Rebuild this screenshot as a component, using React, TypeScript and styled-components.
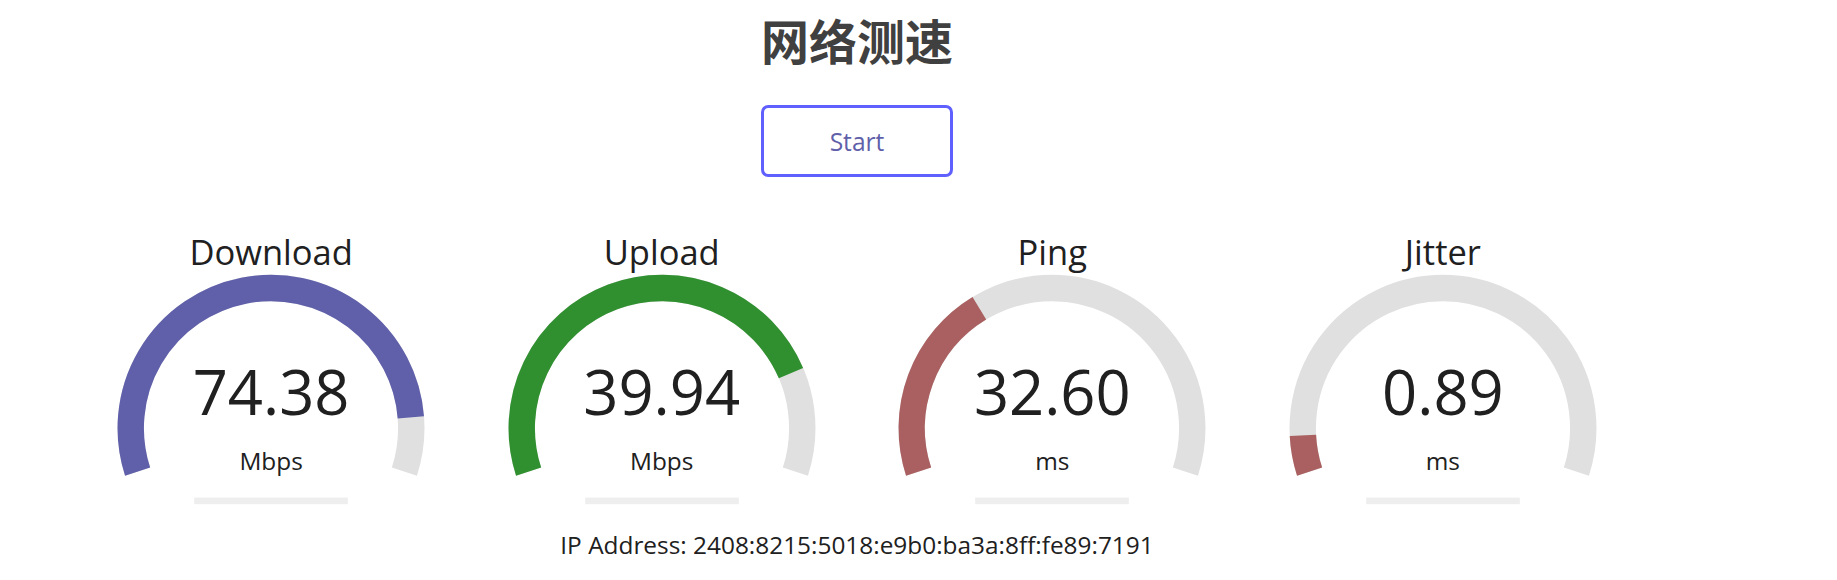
import React from "react";
import styled, { createGlobalStyle } from "styled-components";

const GlobalStyle = createGlobalStyle`
  html, body {
    margin: 0;
    padding: 0;
    border: none;
    background: #ffffff;
    color: #202020;
  }
  body {
    font-family: "Open Sans", "Noto Sans", sans-serif;
    font-size: 24.4px;
  }
`;

const Page = styled.div`
  width: 1714px;
  display: flex;
  flex-direction: column;
  align-items: center;
  text-align: center;
`;

const Title = styled.h1`
  margin: 0;
  padding-top: 11px;
  font-family: "Noto Sans CJK SC", "Noto Sans", sans-serif;
  font-size: 48px;
  line-height: 56px;
  font-weight: 700;
  color: #404040;
`;

const StartButton = styled.div`
  margin-top: 38px;
  box-sizing: border-box;
  width: 192px;
  height: 72px;
  border: 3.6px solid #6060ff;
  border-radius: 7.2px;
  display: flex;
  align-items: center;
  justify-content: center;
  color: #6060aa;
  font-size: 24.6px;
  cursor: pointer;
`;

const GaugeRow = styled.div`
  margin-top: 47px;
  display: flex;
  gap: 6.6px;
  justify-content: center;
`;

const GaugeBox = styled.div`
  position: relative;
  width: 384px;
  height: 300px;
  display: flex;
  flex-direction: column;
  align-items: stretch;
`;

const GaugeSvg = styled.svg`
  position: absolute;
  inset: 0;
  width: 100%;
  height: 100%;
  z-index: 0;
`;

const GaugeName = styled.div`
  position: relative;
  z-index: 1;
  padding-top: 5.5px;
  font-size: 34.5px;
  line-height: 44px;
`;

const GaugeValue = styled.div`
  position: relative;
  z-index: 1;
  margin-top: 77.5px;
  font-size: 61.5px;
  line-height: 80px;
`;

const GaugeUnit = styled.div`
  position: relative;
  z-index: 1;
  margin-top: 13.5px;
  font-size: 24.4px;
  line-height: 32px;
`;

const IpLine = styled.div`
  margin-top: 5px;
  font-size: 24.4px;
  line-height: 32px;
`;

const W = 384;
const H = 300;
const S = H * 0.0055;
const LW = 16 * S;
const CX = W / 2;
const CY = H - 58 * S;
const R = H / 1.8 - LW;

function arcPath(a0: number, a1: number): string {
  const x0 = CX + R * Math.cos(a0);
  const y0 = CY + R * Math.sin(a0);
  const x1 = CX + R * Math.cos(a1);
  const y1 = CY + R * Math.sin(a1);
  const large = a1 - a0 > Math.PI ? 1 : 0;
  return `M ${x0} ${y0} A ${R} ${R} 0 ${large} 1 ${x1} ${y1}`;
}

const mbpsToAmount = (s: number) => 1 - 1 / Math.pow(1.3, Math.sqrt(s));
const msToAmount = (s: number) => 1 - 1 / Math.pow(1.08, Math.sqrt(s));

type GaugeProps = {
  name: string;
  value: string;
  unit: string;
  amount: number;
  color: string;
};

function Gauge({ name, value, unit, amount, color }: GaugeProps) {
  const start = -Math.PI * 1.1;
  const end = Math.PI * 0.1;
  const fgEnd = amount * Math.PI * 1.2 - Math.PI * 1.1;
  return (
    <GaugeBox>
      <GaugeSvg viewBox={`0 0 ${W} ${H}`}>
        <path d={arcPath(start, end)} fill="none" stroke="#e0e0e0" strokeWidth={LW} />
        <path d={arcPath(start, fgEnd)} fill="none" stroke={color} strokeWidth={LW} />
        <rect x={W * 0.3} y={H - 16 * S} width={W * 0.4} height={4 * S} fill="#eeeeee" />
      </GaugeSvg>
      <GaugeName>{name}</GaugeName>
      <GaugeValue>{value}</GaugeValue>
      <GaugeUnit>{unit}</GaugeUnit>
    </GaugeBox>
  );
}

const gauges: GaugeProps[] = [
  { name: "Download", value: "74.38", unit: "Mbps", amount: mbpsToAmount(74.38), color: "#6060aa" },
  { name: "Upload", value: "39.94", unit: "Mbps", amount: mbpsToAmount(39.94), color: "#309030" },
  { name: "Ping", value: "32.60", unit: "ms", amount: msToAmount(32.6), color: "#aa6060" },
  { name: "Jitter", value: "0.89", unit: "ms", amount: msToAmount(0.89), color: "#aa6060" },
];

export default function App() {
  return (
    <>
      <GlobalStyle />
      <Page>
        <Title>网络测速</Title>
        <StartButton>Start</StartButton>
        <GaugeRow>
          {gauges.map((g) => (
            <Gauge key={g.name} {...g} />
          ))}
        </GaugeRow>
        <IpLine>IP Address: 2408:8215:5018:e9b0:ba3a:8ff:fe89:7191</IpLine>
      </Page>
    </>
  );
}
